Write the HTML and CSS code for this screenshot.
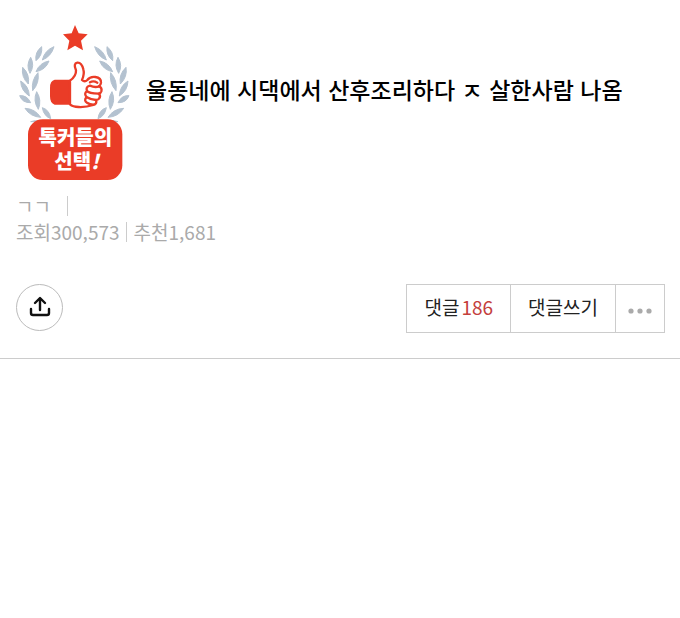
FILE: index.html
```html
<!DOCTYPE html>
<html lang="ko">
<head>
  <meta charset="UTF-8" />
  <meta name="viewport" content="width=device-width, initial-scale=1.0" />
  <title>울동네에 시댁에서 산후조리하다 ㅈ 살한사람 나옴</title>
  <link rel="stylesheet" href="styles.css">
</head>
<body>
  <header class="post-header">
    <div class="headline">
      <svg class="badge" viewBox="0 0 348 492" role="img" aria-label="톡커들의 선택!">
        <defs>
          <g id="laurel">
            <path d="M114 80Q106 109 79 120Q86 91 114 80Z" />
            <path d="M77 80Q80 106 60 122Q56 96 77 80Z" />
            <path d="M99 123Q89 150 60 155Q71 128 99 123Z" />
            <path d="M44 112Q57 136 42 160Q29 136 44 112Z" />
            <path d="M20 142Q42 163 37 192Q15 171 20 142Z" />
            <path d="M66 158Q71 189 50 212Q45 181 66 158Z" />
            <path d="M14 183Q39 198 40 228Q15 212 14 183Z" />
            <path d="M11 227Q33 225 44 248Q19 249 11 227Z" />
            <path d="M62 215Q78 240 67 268Q50 242 62 215Z" />
            <path d="M27 265Q57 266 74 292Q43 290 27 265Z" />
            <path d="M79 263Q101 270 104 296Q83 288 79 263Z" />
            <path d="M44 305Q56 299 76 305Z" />
          </g>
        </defs>
        <use href="#laurel" class="leaf" />
        <use href="#laurel" class="leaf" transform="translate(350 0) scale(-1 1)" />
        <path class="red" d="M177 15L188 40L215 43L195 62L201 91L177 77L154 91L160 62L141 43L167 40Z" />
        <path class="red" d="M162 179H116Q102 182 102 203V228Q102 250 116 254H162Z" />
        <path class="hand" d="M162 182Q181 168 180 151Q171 130 184 128Q197 127 202 148Q206 162 198 180Q206 188 214 180Q222 169 238 171Q256 174 255 188Q254 196 249 199Q259 203 256 214Q254 220 248 221Q256 228 249 236Q246 240 240 240Q244 251 232 255Q210 262 188 261Q170 260 162 253Z" />
        <path class="line" d="M222 187Q232 181 244 188M249 199Q237 204 222 197Q208 200 213 213Q218 220 248 221M213 213Q202 222 213 232Q225 240 240 240M211 232Q203 242 213 248Q222 254 232 254" />
        <rect class="red" x="36" y="298" width="283" height="182" rx="44" />
        <text class="badge-text" x="178" y="375">톡커들의</text>
        <text class="badge-text" x="182" y="447">선택<tspan class="bang">!</tspan></text>
      </svg>
      <h1>울동네에 시댁에서 산후조리하다 ㅈ 살한사람 나옴</h1>
    </div>

    <div class="meta">
      <div class="meta-row"><span class="writer">ㄱㄱ</span><i class="bar"></i></div>
      <div class="meta-row">
        <span>조회</span><span>300,573</span><i class="bar"></i><span>추천</span><span>1,681</span>
      </div>
    </div>

    <div class="actions">
      <button class="share" type="button" aria-label="공유">
        <svg viewBox="0 0 24 24">
          <path d="M12 14V3M7 7L12 2L17 7M3 13V17Q3 19 5 19H19Q21 19 21 17V13" />
        </svg>
      </button>
      <div class="btn-group">
        <a href="#comments">댓글 <span class="count">186</span></a>
        <a href="#write">댓글쓰기</a>
        <button class="more" type="button" aria-label="더보기">
          <svg viewBox="0 0 24 6">
            <circle cx="3" cy="3" r="2.6" />
            <circle cx="12" cy="3" r="2.6" />
            <circle cx="21" cy="3" r="2.6" />
          </svg>
        </button>
      </div>
    </div>
  </header>
</body>
</html>
```

FILE: styles.css
```css
* {
  box-sizing: border-box;
}

body {
  margin: 0;
  background: #fff;
  color: #222;
  font-family: "Noto Sans CJK KR", sans-serif;
}

.post-header {
  padding: 20px 15px 25px 16px;
  border-bottom: 1px solid #ccc;
}

.headline {
  display: flex;
  align-items: center;
  gap: 14px;
}

.badge {
  flex: none;
  width: 116px;
  height: 164px;
}

.leaf {
  fill: #b4c2d0;
  stroke: #b4c2d0;
  stroke-width: 3;
  stroke-linejoin: round;
}

.red {
  fill: #ea3c27;
}

.hand {
  fill: #fff;
}

.hand,
.line {
  stroke: #ea3c27;
  stroke-width: 7;
  stroke-linecap: round;
  stroke-linejoin: round;
}

.line {
  fill: none;
}

.badge-text {
  fill: #fff;
  font-size: 60px;
  font-weight: 900;
  text-anchor: middle;
}

.bang {
  font-style: italic;
}

h1 {
  margin: 0;
  padding-bottom: 26px;
  color: #000;
  font-size: 23px;
  font-weight: 500;
  line-height: 32px;
}

.meta {
  margin-top: 9px;
  color: #aaa;
  font-size: 19px;
  line-height: 26px;
}

.meta-row {
  display: flex;
  align-items: center;
}

.bar {
  width: 1px;
  height: 20px;
  margin: 0 7px 0 6px;
  background: #ccc;
}

.writer {
  margin-right: 10px;
}

.actions {
  display: flex;
  align-items: flex-start;
  justify-content: space-between;
  margin-top: 39px;
}

.share {
  display: flex;
  align-items: center;
  justify-content: center;
  width: 47px;
  height: 47px;
  padding: 0;
  border: 1px solid #bbb;
  border-radius: 50%;
  background: #fff;
  cursor: pointer;
}

.share svg {
  width: 24px;
  height: 24px;
  fill: none;
  stroke: #111;
  stroke-width: 2.4;
  stroke-linecap: round;
  stroke-linejoin: round;
}

.btn-group {
  display: flex;
  border: 1px solid #ccc;
}

.btn-group a,
.more {
  display: flex;
  gap: 2px;
  padding: 0 17px 3px;
  color: #222;
  font-size: 19px;
  line-height: 44px;
  text-decoration: none;
}

.btn-group a + a,
.more {
  border: 0;
  border-left: 1px solid #ccc;
}

.btn-group .count {
  color: #c4403c;
}

.more {
  align-items: center;
  padding: 4px 12px 0;
  background: #fff;
  cursor: pointer;
}

.more svg {
  display: block;
  width: 24px;
  height: 6px;
  fill: #aaa;
}
```
